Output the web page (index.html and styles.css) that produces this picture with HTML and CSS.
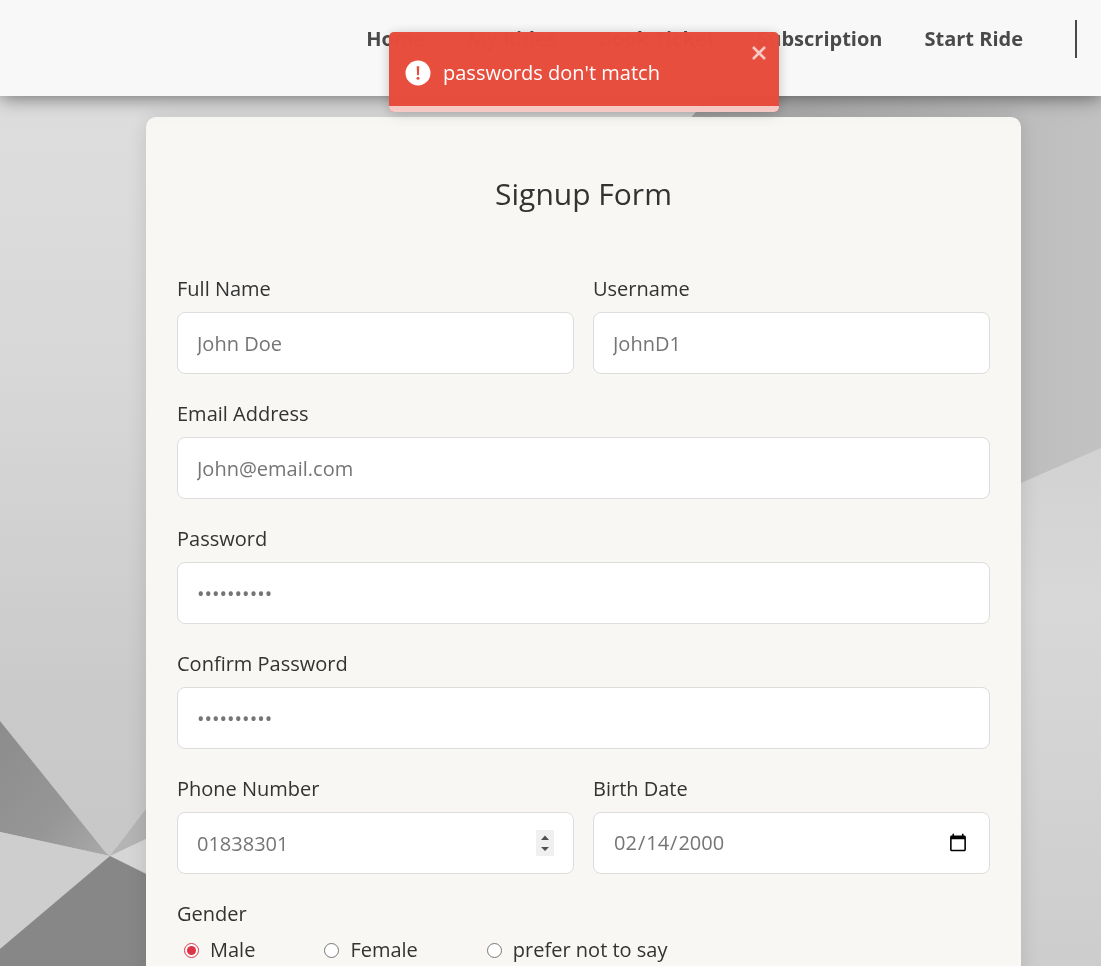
FILE: index.html
```html
<!DOCTYPE html>
<html lang="en">
<head>
<meta charset="utf-8">
<meta name="viewport" content="width=device-width, initial-scale=1">
<title>Signup</title>
<link rel="stylesheet" href="styles.css">
</head>
<body>
<svg class="backdrop" viewBox="0 0 1101 966" preserveAspectRatio="none" aria-hidden="true">
  <defs>
    <linearGradient id="wall" x1="0" y1="0" x2="0" y2="1">
      <stop offset="0.1" stop-color="#dedede"/>
      <stop offset="0.4" stop-color="#d7d7d7"/>
      <stop offset="0.72" stop-color="#cacaca"/>
      <stop offset="1" stop-color="#c6c6c6"/>
    </linearGradient>
    <linearGradient id="right" x1="0" y1="0" x2="0" y2="1">
      <stop offset="0" stop-color="#d2d2d2"/>
      <stop offset="0.3" stop-color="#d8d8d8"/>
      <stop offset="1" stop-color="#cdcdcd"/>
    </linearGradient>
    <linearGradient id="shard" x1="0" y1="0" x2="1" y2="1">
      <stop offset="0" stop-color="#8c8c8c"/>
      <stop offset="0.6" stop-color="#969696"/>
      <stop offset="1" stop-color="#aaaaaa"/>
    </linearGradient>
    <linearGradient id="top" x1="0" y1="0" x2="1" y2="0">
      <stop offset="0" stop-color="#a8a8a8"/>
      <stop offset="1" stop-color="#c2c2c2"/>
    </linearGradient>
  </defs>
  <rect width="1101" height="966" fill="url(#wall)"/>
  <path d="M1021 483L1101 448V966H900V530Z" fill="url(#right)"/>
  <path d="M710 96H1101V448L1021 483L680 130Z" fill="url(#top)"/>
  <path d="M0 721L106 853L110 856L0 832Z" fill="url(#shard)"/>
  <path d="M0 832L110 856L0 949Z" fill="#cecece"/>
  <path d="M110 856L146 809V839Z" fill="#b4b4b4"/>
  <path d="M110 856L146 839V873Z" fill="#d6d6d6"/>
  <path d="M0 949L110 856L300 951V966H0Z" fill="#878787"/>
</svg>

<header class="site-header">
  <nav class="nav" aria-label="Main">
    <a href="#">Home</a>
    <a href="#">My Rides</a>
    <a href="#">Book Ticket</a>
    <a href="#">Subscription</a>
    <a href="#">Start Ride</a>
    <span class="divider"></span>
  </nav>
</header>

<div class="toast" role="alert">
  <div class="toast-body">
    <svg class="toast-icon" viewBox="0 0 26 26" aria-hidden="true">
      <circle cx="13" cy="13" r="12.5" fill="#fff"/>
      <path d="M11.7 6.3h2.6l-.4 9h-1.8z" fill="#e74c3c"/>
      <circle cx="13" cy="18.2" r="1.5" fill="#e74c3c"/>
    </svg>
    <span>passwords don't match</span>
  </div>
  <button class="toast-close" type="button" aria-label="Close">
    <svg viewBox="0 0 14 14" aria-hidden="true"><path d="M1 1L13 13M13 1L1 13" fill="none" stroke="currentColor" stroke-width="2.6"/></svg>
  </button>
  <div class="toast-progress"></div>
</div>

<main class="page">
  <form class="card">
    <h1>Signup Form</h1>
    <div class="fields">
      <div class="field">
        <label for="name">Full Name</label>
        <input id="name" type="text" placeholder="John Doe">
      </div>
      <div class="field">
        <label for="user">Username</label>
        <input id="user" type="text" placeholder="JohnD1">
      </div>
      <div class="field wide">
        <label for="email">Email Address</label>
        <input id="email" type="email" placeholder="John@email.com">
      </div>
      <div class="field wide">
        <label for="pass">Password</label>
        <input id="pass" type="password" placeholder="••••••••••">
      </div>
      <div class="field wide">
        <label for="confirm">Confirm Password</label>
        <input id="confirm" type="password" placeholder="••••••••••">
      </div>
      <div class="field">
        <label for="phone">Phone Number</label>
        <input id="phone" type="number" placeholder="01838301">
      </div>
      <div class="field">
        <label for="birth">Birth Date</label>
        <input id="birth" type="date" value="2000-02-14">
      </div>
      <fieldset class="wide gender">
        <legend>Gender</legend>
        <div class="options">
          <label><input type="radio" name="gender" checked>Male</label>
          <label><input type="radio" name="gender">Female</label>
          <label><input type="radio" name="gender">prefer not to say</label>
        </div>
      </fieldset>
    </div>
  </form>
</main>
</body>
</html>
```
FILE: styles.css
```css
* {
  box-sizing: border-box;
}

html {
  overflow: hidden;
}

body {
  margin: 0;
  font-family: "Open Sans", "Noto Sans", sans-serif;
  font-size: 20px;
  line-height: 28px;
  color: #333;
  background: #d0d0d0;
}

.backdrop {
  position: fixed;
  inset: 0;
  width: 100%;
  height: 100%;
  z-index: -1;
}

.site-header {
  position: relative;
  height: 96px;
  padding: 20px 24px;
  background: #f8f8f8;
  box-shadow: 0 0 20px rgba(0, 0, 0, 0.6);
}

.nav {
  display: flex;
  justify-content: flex-end;
  align-items: center;
  gap: 42px;
  white-space: nowrap;
}

.nav a {
  color: #4a4a4a;
  font-weight: 700;
  text-decoration: none;
}

.divider {
  width: 2px;
  height: 38px;
  margin-left: 10px;
  background: #4a4a4a;
}

.toast {
  position: fixed;
  z-index: 10;
  top: 32px;
  left: 389px;
  width: 390px;
  height: 80px;
  border-radius: 5px;
  overflow: hidden;
  color: #fff;
  background: #e74c3c;
  box-shadow: 0 1px 12px rgba(0, 0, 0, 0.15), 0 3px 18px rgba(0, 0, 0, 0.08);
  opacity: 0.99;
}

.toast-body {
  display: flex;
  align-items: center;
  gap: 12px;
  height: 100%;
  padding: 10px 16px 8px;
}

.toast-icon {
  width: 26px;
  height: 26px;
}

.toast-close {
  position: absolute;
  top: 14px;
  right: 13px;
  width: 14px;
  height: 14px;
  padding: 0;
  border: 0;
  color: #fff;
  background: none;
  opacity: 0.7;
}

.toast-close svg {
  display: block;
  width: 100%;
}

.toast-progress {
  position: absolute;
  inset: auto 0 0;
  height: 6px;
  background: #f6c9c4;
}

.page {
  padding: 21px 80px 0 146px;
}

.card {
  padding: 56px 31px 32px;
  border-radius: 10px;
  background: #f8f7f3;
  box-shadow: 0 0 20px rgba(0, 0, 0, 0.12);
}

h1 {
  margin: 0 0 60px;
  font-size: 30px;
  font-weight: 400;
  line-height: 42px;
  text-align: center;
}

.fields {
  display: grid;
  grid-template-columns: 1fr 1fr;
  gap: 26px 19px;
}

.wide {
  grid-column: 1 / -1;
}

.field {
  display: grid;
  gap: 9px;
}

.field input {
  width: 100%;
  height: 62px;
  padding: 0 19px;
  border: 1px solid #ddd;
  border-radius: 8px;
  font: inherit;
  color: #757575;
  background: #fff;
}

.field input::placeholder {
  color: #757575;
}

input[type="number"]::-webkit-inner-spin-button {
  -webkit-appearance: none;
  width: 18px;
  height: 26px;
  opacity: 1;
  background: #f0f0f0 url("data:image/svg+xml,%3Csvg xmlns='http://www.w3.org/2000/svg' width='18' height='26'%3E%3Cpath d='M5 10L9 5.500L13 10ZM5 17L9 21L13 17Z' fill='%23505050'/%3E%3C/svg%3E") center no-repeat;
}

.gender {
  margin: 0;
  padding: 0;
  border: 0;
}

.gender legend {
  padding: 0;
}

.options {
  display: flex;
  gap: 69px;
  padding: 8px 7px 0;
}

.options label {
  display: flex;
  align-items: center;
  gap: 11px;
}

.options input {
  width: 15px;
  height: 15px;
  margin: 0;
  accent-color: #dc3545;
}
```
